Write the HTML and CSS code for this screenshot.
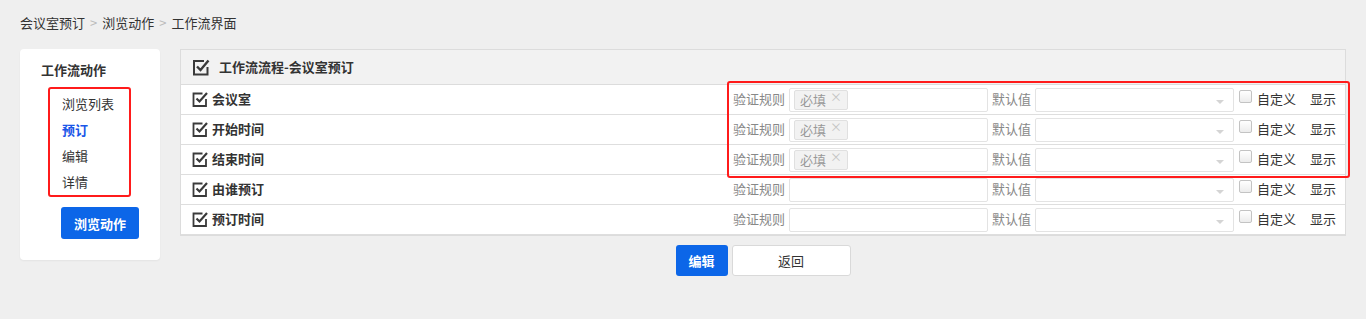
FILE: index.html
```html
<!DOCTYPE html>
<html lang="zh-CN">
<head>
<meta charset="UTF-8" />
<title>工作流界面</title>
<link rel="stylesheet" href="styles.css">
</head>
<body>

<div class="crumbs">
  <span>会议室预订</span><span class="sep">&gt;</span><span>浏览动作</span><span class="sep">&gt;</span><span>工作流界面</span>
</div>

<div class="layout">
  <div class="side">
    <div class="side-title">工作流动作</div>
    <ul class="side-menu">
      <li>浏览列表</li>
      <li class="active">预订</li>
      <li>编辑</li>
      <li>详情</li>
    </ul>
    <button class="btn btn-blue side-btn">浏览动作</button>
  </div>

  <div class="main">
    <div class="flow">
      <div class="flow-head">
        <svg class="ico-big" viewBox="0 0 18 18"><path d="M12 3H2V16.5H15.5V9" fill="none" stroke="#3a3a3a" stroke-width="2"/><path d="M5 8.5L8.5 12L16.5 2.5" fill="none" stroke="#3a3a3a" stroke-width="2.4"/></svg>
        <span>工作流流程-会议室预订</span>
      </div>

      <div class="row">
        <div class="field"><svg class="ico" viewBox="0 0 16 16"><path d="M10.5 2.5H1.5V15H14V8" fill="none" stroke="#3a3a3a" stroke-width="1.8"/><path d="M4.5 7.5L7.5 10.5L15 2" fill="none" stroke="#3a3a3a" stroke-width="2.2"/></svg>会议室</div>
        <div class="ctrls">
          <span class="lbl">验证规则</span>
          <div class="inp"><span class="tag">必填<i>×</i></span></div>
          <span class="lbl">默认值</span>
          <div class="inp sel"><b class="caret"></b></div>
          <span class="cb"></span><span class="txt">自定义</span>
          <span class="txt show">显示</span>
        </div>
      </div>

      <div class="row">
        <div class="field"><svg class="ico" viewBox="0 0 16 16"><path d="M10.5 2.5H1.5V15H14V8" fill="none" stroke="#3a3a3a" stroke-width="1.8"/><path d="M4.5 7.5L7.5 10.5L15 2" fill="none" stroke="#3a3a3a" stroke-width="2.2"/></svg>开始时间</div>
        <div class="ctrls">
          <span class="lbl">验证规则</span>
          <div class="inp"><span class="tag">必填<i>×</i></span></div>
          <span class="lbl">默认值</span>
          <div class="inp sel"><b class="caret"></b></div>
          <span class="cb"></span><span class="txt">自定义</span>
          <span class="txt show">显示</span>
        </div>
      </div>

      <div class="row">
        <div class="field"><svg class="ico" viewBox="0 0 16 16"><path d="M10.5 2.5H1.5V15H14V8" fill="none" stroke="#3a3a3a" stroke-width="1.8"/><path d="M4.5 7.5L7.5 10.5L15 2" fill="none" stroke="#3a3a3a" stroke-width="2.2"/></svg>结束时间</div>
        <div class="ctrls">
          <span class="lbl">验证规则</span>
          <div class="inp"><span class="tag">必填<i>×</i></span></div>
          <span class="lbl">默认值</span>
          <div class="inp sel"><b class="caret"></b></div>
          <span class="cb"></span><span class="txt">自定义</span>
          <span class="txt show">显示</span>
        </div>
      </div>

      <div class="row">
        <div class="field"><svg class="ico" viewBox="0 0 16 16"><path d="M10.5 2.5H1.5V15H14V8" fill="none" stroke="#3a3a3a" stroke-width="1.8"/><path d="M4.5 7.5L7.5 10.5L15 2" fill="none" stroke="#3a3a3a" stroke-width="2.2"/></svg>由谁预订</div>
        <div class="ctrls">
          <span class="lbl">验证规则</span>
          <div class="inp"></div>
          <span class="lbl">默认值</span>
          <div class="inp sel"><b class="caret"></b></div>
          <span class="cb"></span><span class="txt">自定义</span>
          <span class="txt show">显示</span>
        </div>
      </div>

      <div class="row">
        <div class="field"><svg class="ico" viewBox="0 0 16 16"><path d="M10.5 2.5H1.5V15H14V8" fill="none" stroke="#3a3a3a" stroke-width="1.8"/><path d="M4.5 7.5L7.5 10.5L15 2" fill="none" stroke="#3a3a3a" stroke-width="2.2"/></svg>预订时间</div>
        <div class="ctrls">
          <span class="lbl">验证规则</span>
          <div class="inp"></div>
          <span class="lbl">默认值</span>
          <div class="inp sel"><b class="caret"></b></div>
          <span class="cb"></span><span class="txt">自定义</span>
          <span class="txt show">显示</span>
        </div>
      </div>

      <!-- red highlight over the first three rows -->
      <div class="mark"></div>
    </div>

    <div class="actions">
      <button class="btn btn-blue">编辑</button>
      <button class="btn btn-white">返回</button>
    </div>
  </div>
</div>

</body>
</html>
```

FILE: styles.css
```css
body {
  margin: 0;
  padding: 14px 20px 0;
  background: #efefef;
  color: #333;
  font-family: "Noto Sans CJK SC", "Noto Sans", sans-serif;
  font-size: 13px;
  line-height: 18px;
}

.crumbs {
  display: flex;
  align-items: center;
}
.crumbs .sep {
  color: #bbb;
  margin: 0 5px;
}

.layout {
  display: flex;
  align-items: flex-start;
  gap: 20px;
  margin-top: 17px;
}

/* left card */
.side {
  width: 140px;
  box-sizing: border-box;
  background: #fff;
  border-radius: 4px;
  padding: 12px 0 21px 21px;
  box-shadow: 0 1px 2px rgba(0, 0, 0, 0.05);
}
.side-title {
  font-weight: 700;
}
.side-menu {
  list-style: none;
  margin: 8px 0 0 7px;
  padding: 2px 0 0 12px;
  width: 83px;
  box-sizing: border-box;
  border: 2px solid #ff1b1b;
  border-radius: 3px;
}
.side-menu li {
  line-height: 26px;
}
.side-menu li.active {
  color: #1a56e8;
  font-weight: 700;
}
.side-btn {
  margin: 10px 0 0 20px;
  width: 78px;
  height: 32px;
}

.btn {
  font-family: inherit;
  font-size: 13px;
  border-radius: 3px;
  cursor: pointer;
  padding: 0;
}
.btn-blue {
  background: #0c66e8;
  border: none;
  color: #fff;
  font-weight: 700;
}
.btn-white {
  background: #fff;
  border: 1px solid #d9d9d9;
  color: #333;
}

/* main table */
.main {
  flex: 1;
}
.flow {
  position: relative;
  background: #fff;
  border: 1px solid #dcdcdc;
}
.flow-head {
  display: flex;
  align-items: center;
  height: 34px;
  padding-left: 11px;
  background: #f2f2f2;
  border-bottom: 1px solid #dcdcdc;
  font-weight: 700;
}
.ico-big {
  width: 18px;
  height: 18px;
  margin-right: 9px;
}
.row {
  display: flex;
  align-items: center;
  height: 29px;
  border-bottom: 1px solid #dedede;
}
.row:last-of-type {
  border-bottom: none;
}
.field {
  flex: 1;
  display: flex;
  align-items: center;
  padding-left: 11px;
  font-weight: 700;
  position: relative;
  top: -1px;
}
.ico {
  width: 16px;
  height: 16px;
  margin-right: 4px;
}
.ctrls {
  display: flex;
  align-items: center;
  padding-right: 9px;
}
.lbl {
  color: #888;
  margin-right: 4px;
  position: relative;
  top: -1px;
}
.inp {
  position: relative;
  width: 193px;
  height: 22px;
  border: 1px solid #e3e3e3;
  border-radius: 2px;
  margin-right: 4px;
  display: flex;
  align-items: center;
  padding-left: 4px;
}
.tag {
  display: flex;
  align-items: center;
  height: 18px;
  padding: 0 5px;
  background: #f2f2f2;
  border: 1px solid #e0e0e0;
  border-radius: 2px;
  color: #999;
  font-size: 13px;
}
.tag i {
  font-style: normal;
  color: #c4c4c4;
  font-size: 12px;
  margin-left: 4px;
  position: relative;
  top: -3px;
}
.sel {
  margin-right: 5px;
}
.caret {
  position: absolute;
  right: 9px;
  top: 11px;
  border: 4px solid transparent;
  border-top: 4px solid #d4d4d4;
  border-bottom: none;
}
.cb {
  width: 11px;
  height: 11px;
  border: 1px solid #c3c3c3;
  border-radius: 2px;
  background: linear-gradient(#fff, #ececec);
  margin-right: 5px;
  position: relative;
  top: -3px;
}
.txt {
  position: relative;
  top: -1px;
}
.txt.show {
  margin-left: 14px;
}

.mark {
  position: absolute;
  top: 31px;
  right: -5px;
  width: 619px;
  height: 93px;
  border: 2px solid #ff1b1b;
  border-radius: 3px;
  pointer-events: none;
}

.actions {
  display: flex;
  justify-content: center;
  gap: 4px;
  margin-top: 9px;
}
.actions .btn-blue {
  width: 52px;
  height: 31px;
}
.actions .btn-white {
  width: 119px;
  height: 31px;
}
```
